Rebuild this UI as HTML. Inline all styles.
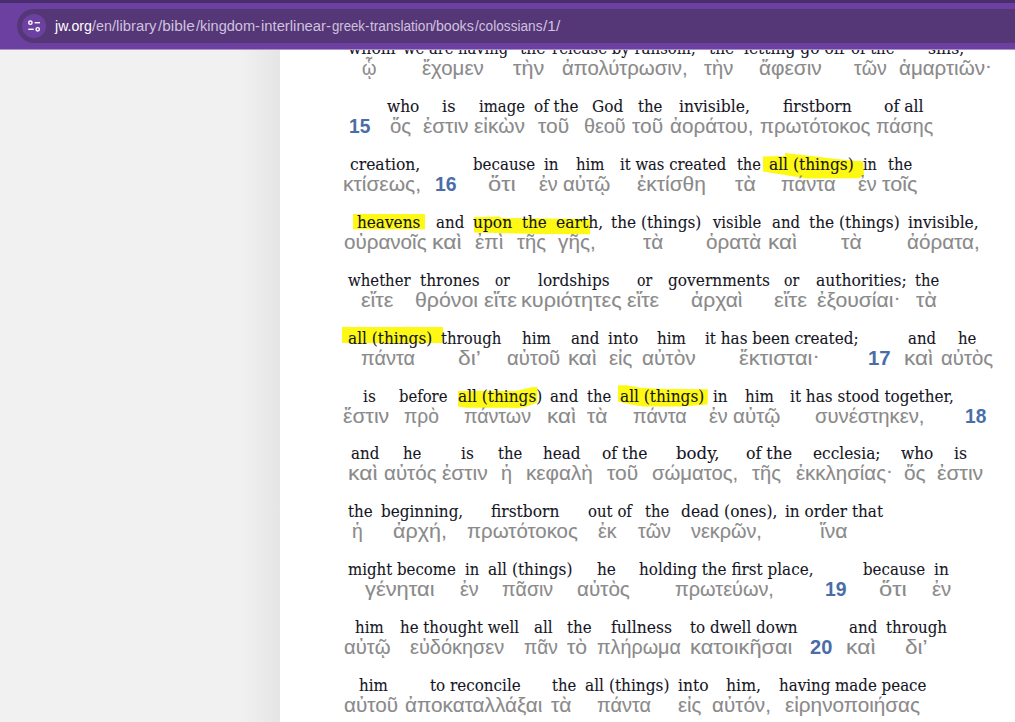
<!DOCTYPE html>
<html lang="en"><head><meta charset="utf-8"><title>Colossians 1 — Kingdom Interlinear</title>
<style>
html,body{margin:0;padding:0;}
body{width:1015px;height:722px;overflow:hidden;background:#fff;position:relative;font-family:"Liberation Sans", "DejaVu Sans", sans-serif;}
#side{position:absolute;left:0;top:49px;width:280px;height:673px;background:linear-gradient(to right,#f1f1f1 0,#f1f1f1 240px,#e5e5e5 280px);}
#page{position:absolute;left:0;top:0;width:1015px;height:722px;overflow:hidden;}
.t{position:absolute;white-space:pre;line-height:24px;height:24px;transform-origin:0 50%;margin:0;padding:0;}
.e{font-family:"DejaVu Serif", "Liberation Serif", serif;font-size:16.8px;color:#15151f;-webkit-text-stroke:0.1px #15151f;}
.g{font-family:"Liberation Sans", "DejaVu Sans", sans-serif;font-size:20.4px;color:#8a8a8a;-webkit-text-stroke:0.1px #8a8a8a;}
.u,.w{font-family:"Liberation Sans",sans-serif;font-size:13.8px;color:#cfc2de;}
.w{color:#fff;}
.at{position:relative;top:-3px;}
.v{font-family:"Liberation Sans", "DejaVu Sans", sans-serif;font-size:19.4px;font-weight:bold;color:#4a6da7;}
#bar{position:absolute;left:0;top:0;width:1015px;height:49px;background:#6c40a0;border-bottom:1px solid #a991c8;box-sizing:content-box;}
#strip{position:absolute;left:0;top:0;width:1015px;height:3px;background:#4a2d6e;}
#pill{position:absolute;left:17px;top:9px;width:1030px;height:34px;border-radius:17px;background:#553778;}
#ic{position:absolute;left:22px;top:14px;width:24px;height:24px;border-radius:12px;background:#6c40a0;}
#url{position:absolute;white-space:pre;transform-origin:0 50%;font-family:"Liberation Sans",sans-serif;font-size:14px;line-height:20px;height:20px;color:#d2c6e0;}
#url b{font-weight:normal;color:#fff;}
</style></head>
<body>
<div id="page">
<div id="side"></div>
<svg id="hl" style="position:absolute;left:0;top:0" width="1015" height="722" viewBox="0 0 1015 722" fill="#fdf914">
<polygon points="763,156.4 785,156 785.1,153.1 803,155 832,158.4 856.7,161 863,161.2 864.2,175.5 859,178.2 807,178.5 784.6,175 763,171.4"/>
<rect x="353" y="214" width="72" height="15.3"/>
<polygon points="474,217 500,216.5 501,218 590,219 590.2,234.2 540,234 474,232.6"/>
<rect x="342" y="327" width="101" height="16"/>
<polygon points="458,391.1 516,391.1 531.6,387.3 537.5,386.9 537,402.6 527,406.5 518.6,407.9 466.6,407.7 458,406.5"/>
<polygon points="618,385.2 626.3,385.2 640.5,387.8 664,389 707.9,389.2 707.6,404.4 680.7,406.5 642.8,406.5 633.4,405 618,401.4"/>
</svg>

<div id="text">
<span class="t e" style="left:348.00px;top:36.00px;transform:scaleX(0.9303)">whom</span>
<span class="t e" style="left:402.90px;top:36.00px;transform:scaleX(0.8755)">we are having</span>
<span class="t e" style="left:520.00px;top:36.00px;transform:scaleX(0.9255)">the</span>
<span class="t e" style="left:552.00px;top:36.00px;transform:scaleX(0.8898)">release by ransom,</span>
<span class="t e" style="left:709.25px;top:36.00px;transform:scaleX(0.9165)">the</span>
<span class="t e" style="left:743.50px;top:36.00px;transform:scaleX(0.9223)">letting go off</span>
<span class="t e" style="left:850.50px;top:36.00px;transform:scaleX(0.8841)">of the</span>
<span class="t e" style="left:927.50px;top:36.00px;transform:scaleX(0.9359)">sins,</span>
<span class="t g" style="left:361.50px;top:56.00px;transform:scaleX(0.9062)">ᾧ</span>
<span class="t g" style="left:422.00px;top:56.00px;transform:scaleX(1.0012)">ἔχομεν</span>
<span class="t g" style="left:513.25px;top:56.00px;transform:scaleX(1.0546)">τὴν</span>
<span class="t g" style="left:561.50px;top:56.00px;transform:scaleX(0.9979)">ἀπολύτρωσιν,</span>
<span class="t g" style="left:704.25px;top:56.00px;transform:scaleX(0.9866)">τὴν</span>
<span class="t g" style="left:758.50px;top:56.00px;transform:scaleX(1.0210)">ἄφεσιν</span>
<span class="t g" style="left:853.50px;top:56.00px;transform:scaleX(0.9566)">τῶν</span>
<span class="t g" style="left:899.25px;top:56.00px;transform:scaleX(1.0074)">ἁμαρτιῶν<span class="at">·</span></span>
<span class="t e" style="left:387.00px;top:94.00px;transform:scaleX(0.9169)">who</span>
<span class="t e" style="left:441.50px;top:94.00px;transform:scaleX(0.9725)">is</span>
<span class="t e" style="left:479.00px;top:94.00px;transform:scaleX(0.8842)">image</span>
<span class="t e" style="left:534.00px;top:94.00px;transform:scaleX(0.9045)">of the</span>
<span class="t e" style="left:592.25px;top:94.00px;transform:scaleX(0.9128)">God</span>
<span class="t e" style="left:638.00px;top:94.00px;transform:scaleX(0.8892)">the</span>
<span class="t e" style="left:678.50px;top:94.00px;transform:scaleX(0.9295)">invisible,</span>
<span class="t e" style="left:782.50px;top:94.00px;transform:scaleX(0.9269)">firstborn</span>
<span class="t e" style="left:884.25px;top:94.00px;transform:scaleX(0.9341)">of all</span>
<span class="t g" style="left:390.25px;top:114.00px;transform:scaleX(0.9958)">ὅς</span>
<span class="t g" style="left:423.25px;top:114.00px;transform:scaleX(1.0224)">ἐστιν</span>
<span class="t g" style="left:473.50px;top:114.00px;transform:scaleX(1.0204)">εἰκὼν</span>
<span class="t g" style="left:538.25px;top:114.00px;transform:scaleX(1.0297)">τοῦ</span>
<span class="t g" style="left:583.78px;top:114.00px;transform:scaleX(0.9696)">θεοῦ</span>
<span class="t g" style="left:632.25px;top:114.00px;transform:scaleX(1.0297)">τοῦ</span>
<span class="t g" style="left:669.75px;top:114.00px;transform:scaleX(1.0121)">ἀοράτου,</span>
<span class="t g" style="left:759.75px;top:114.00px;transform:scaleX(0.9973)">πρωτότοκος</span>
<span class="t g" style="left:875.50px;top:114.00px;transform:scaleX(0.9623)">πάσης</span>
<span class="t v" style="left:348.51px;top:114.00px;transform:scaleX(0.9863)">15</span>
<span class="t e" style="left:349.50px;top:152.00px;transform:scaleX(0.9277)">creation,</span>
<span class="t e" style="left:472.75px;top:152.00px;transform:scaleX(0.8957)">because</span>
<span class="t e" style="left:544.00px;top:152.00px;transform:scaleX(0.9012)">in</span>
<span class="t e" style="left:575.75px;top:152.00px;transform:scaleX(0.8858)">him</span>
<span class="t e" style="left:620.25px;top:152.00px;transform:scaleX(0.8817)">it was created</span>
<span class="t e" style="left:736.50px;top:152.00px;transform:scaleX(0.8711)">the</span>
<span class="t e" style="left:768.50px;top:152.00px;transform:scaleX(0.9187)">all (things)</span>
<span class="t e" style="left:863.00px;top:152.00px;transform:scaleX(0.8554)">in</span>
<span class="t e" style="left:888.00px;top:152.00px;transform:scaleX(0.8802)">the</span>
<span class="t g" style="left:342.97px;top:172.00px;transform:scaleX(1.0280)">κτίσεως,</span>
<span class="t g" style="left:488.25px;top:172.00px;transform:scaleX(1.1648)">ὅτι</span>
<span class="t g" style="left:539.00px;top:172.00px;transform:scaleX(0.9691)">ἐν</span>
<span class="t g" style="left:563.25px;top:172.00px;transform:scaleX(1.0054)">αὐτῷ</span>
<span class="t g" style="left:636.50px;top:172.00px;transform:scaleX(1.0255)">ἐκτίσθη</span>
<span class="t g" style="left:734.50px;top:172.00px;transform:scaleX(1.0471)">τὰ</span>
<span class="t g" style="left:781.25px;top:172.00px;transform:scaleX(0.9860)">πάντα</span>
<span class="t g" style="left:858.00px;top:172.00px;transform:scaleX(0.9691)">ἐν</span>
<span class="t g" style="left:882.25px;top:172.00px;transform:scaleX(1.0554)">τοῖς</span>
<span class="t v" style="left:434.50px;top:172.00px;transform:scaleX(0.9984)">16</span>
<span class="t e" style="left:356.50px;top:210.00px;transform:scaleX(0.9099)">heavens</span>
<span class="t e" style="left:435.75px;top:210.00px;transform:scaleX(0.8959)">and</span>
<span class="t e" style="left:473.25px;top:210.00px;transform:scaleX(0.9202)">upon</span>
<span class="t e" style="left:522.00px;top:210.00px;transform:scaleX(0.8983)">the</span>
<span class="t e" style="left:555.75px;top:210.00px;transform:scaleX(0.9291)">earth,</span>
<span class="t e" style="left:611.25px;top:210.00px;transform:scaleX(0.9117)">the (things)</span>
<span class="t e" style="left:712.88px;top:210.00px;transform:scaleX(0.8805)">visible</span>
<span class="t e" style="left:771.75px;top:210.00px;transform:scaleX(0.8880)">and</span>
<span class="t e" style="left:808.75px;top:210.00px;transform:scaleX(0.9168)">the (things)</span>
<span class="t e" style="left:907.50px;top:210.00px;transform:scaleX(0.9262)">invisible,</span>
<span class="t g" style="left:344.00px;top:230.00px;transform:scaleX(1.0098)">οὐρανοῖς</span>
<span class="t g" style="left:432.13px;top:230.00px;transform:scaleX(1.1219)">καὶ</span>
<span class="t g" style="left:475.25px;top:230.00px;transform:scaleX(1.0218)">ἐπὶ</span>
<span class="t g" style="left:517.00px;top:230.00px;transform:scaleX(0.9866)">τῆς</span>
<span class="t g" style="left:558.25px;top:230.00px;transform:scaleX(1.0180)">γῆς,</span>
<span class="t g" style="left:643.25px;top:230.00px;transform:scaleX(1.0222)">τὰ</span>
<span class="t g" style="left:706.25px;top:230.00px;transform:scaleX(1.0131)">ὁρατὰ</span>
<span class="t g" style="left:768.40px;top:230.00px;transform:scaleX(1.1017)">καὶ</span>
<span class="t g" style="left:841.00px;top:230.00px;transform:scaleX(1.0471)">τὰ</span>
<span class="t g" style="left:906.75px;top:230.00px;transform:scaleX(1.0133)">ἀόρατα,</span>
<span class="t e" style="left:347.50px;top:268.00px;transform:scaleX(0.8871)">whether</span>
<span class="t e" style="left:420.25px;top:268.00px;transform:scaleX(0.9159)">thrones</span>
<span class="t e" style="left:494.50px;top:268.00px;transform:scaleX(0.8114)">or</span>
<span class="t e" style="left:538.25px;top:268.00px;transform:scaleX(0.9130)">lordships</span>
<span class="t e" style="left:636.50px;top:268.00px;transform:scaleX(0.8376)">or</span>
<span class="t e" style="left:668.25px;top:268.00px;transform:scaleX(0.9164)">governments</span>
<span class="t e" style="left:784.25px;top:268.00px;transform:scaleX(0.8376)">or</span>
<span class="t e" style="left:816.00px;top:268.00px;transform:scaleX(0.9248)">authorities;</span>
<span class="t e" style="left:914.75px;top:268.00px;transform:scaleX(0.8802)">the</span>
<span class="t g" style="left:360.75px;top:288.00px;transform:scaleX(1.0513)">εἴτε</span>
<span class="t g" style="left:415.45px;top:288.00px;transform:scaleX(1.0456)">θρόνοι</span>
<span class="t g" style="left:484.00px;top:288.00px;transform:scaleX(1.0676)">εἴτε</span>
<span class="t g" style="left:520.94px;top:288.00px;transform:scaleX(1.0604)">κυριότητες</span>
<span class="t g" style="left:626.50px;top:288.00px;transform:scaleX(1.0432)">εἴτε</span>
<span class="t g" style="left:690.75px;top:288.00px;transform:scaleX(1.0338)">ἀρχαὶ</span>
<span class="t g" style="left:773.75px;top:288.00px;transform:scaleX(1.0676)">εἴτε</span>
<span class="t g" style="left:816.75px;top:288.00px;transform:scaleX(1.0401)">ἐξουσίαι<span class="at">·</span></span>
<span class="t g" style="left:916.00px;top:288.00px;transform:scaleX(1.0471)">τὰ</span>
<span class="t e" style="left:347.50px;top:326.00px;transform:scaleX(0.9133)">all (things)</span>
<span class="t e" style="left:441.25px;top:326.00px;transform:scaleX(0.8867)">through</span>
<span class="t e" style="left:522.00px;top:326.00px;transform:scaleX(0.9013)">him</span>
<span class="t e" style="left:570.75px;top:326.00px;transform:scaleX(0.8959)">and</span>
<span class="t e" style="left:607.75px;top:326.00px;transform:scaleX(0.9189)">into</span>
<span class="t e" style="left:656.50px;top:326.00px;transform:scaleX(0.9013)">him</span>
<span class="t e" style="left:704.50px;top:326.00px;transform:scaleX(0.9063)">it has been created;</span>
<span class="t e" style="left:907.50px;top:326.00px;transform:scaleX(0.8880)">and</span>
<span class="t e" style="left:957.50px;top:326.00px;transform:scaleX(0.8891)">he</span>
<span class="t g" style="left:360.75px;top:346.00px;transform:scaleX(0.9770)">πάντα</span>
<span class="t g" style="left:458.25px;top:346.00px;transform:scaleX(1.1192)">δι’</span>
<span class="t g" style="left:507.00px;top:346.00px;transform:scaleX(0.9991)">αὐτοῦ</span>
<span class="t g" style="left:567.91px;top:346.00px;transform:scaleX(1.0916)">καὶ</span>
<span class="t g" style="left:609.00px;top:346.00px;transform:scaleX(0.9949)">εἰς</span>
<span class="t g" style="left:642.00px;top:346.00px;transform:scaleX(1.0223)">αὐτὸν</span>
<span class="t g" style="left:739.00px;top:346.00px;transform:scaleX(1.0709)">ἔκτισται<span class="at">·</span></span>
<span class="t g" style="left:904.40px;top:346.00px;transform:scaleX(1.1017)">καὶ</span>
<span class="t g" style="left:940.50px;top:346.00px;transform:scaleX(0.9984)">αὐτὸς</span>
<span class="t v" style="left:867.95px;top:346.00px;transform:scaleX(1.0488)">17</span>
<span class="t e" style="left:363.25px;top:384.00px;transform:scaleX(0.9164)">is</span>
<span class="t e" style="left:399.00px;top:384.00px;transform:scaleX(0.8817)">before</span>
<span class="t e" style="left:457.50px;top:384.00px;transform:scaleX(0.9133)">all (things)</span>
<span class="t e" style="left:549.50px;top:384.00px;transform:scaleX(0.8959)">and</span>
<span class="t e" style="left:587.00px;top:384.00px;transform:scaleX(0.8802)">the</span>
<span class="t e" style="left:620.00px;top:384.00px;transform:scaleX(0.9133)">all (things)</span>
<span class="t e" style="left:713.25px;top:384.00px;transform:scaleX(0.9012)">in</span>
<span class="t e" style="left:744.50px;top:384.00px;transform:scaleX(0.9013)">him</span>
<span class="t e" style="left:790.00px;top:384.00px;transform:scaleX(0.9091)">it has stood together,</span>
<span class="t g" style="left:343.25px;top:404.00px;transform:scaleX(1.0393)">ἔστιν</span>
<span class="t g" style="left:404.00px;top:404.00px;transform:scaleX(0.9409)">πρὸ</span>
<span class="t g" style="left:463.75px;top:404.00px;transform:scaleX(0.9611)">πάντων</span>
<span class="t g" style="left:546.65px;top:404.00px;transform:scaleX(1.1017)">καὶ</span>
<span class="t g" style="left:586.50px;top:404.00px;transform:scaleX(1.0347)">τὰ</span>
<span class="t g" style="left:632.75px;top:404.00px;transform:scaleX(0.9725)">πάντα</span>
<span class="t g" style="left:708.75px;top:404.00px;transform:scaleX(0.9691)">ἐν</span>
<span class="t g" style="left:732.75px;top:404.00px;transform:scaleX(1.0108)">αὐτῷ</span>
<span class="t g" style="left:815.00px;top:404.00px;transform:scaleX(0.9933)">συνέστηκεν,</span>
<span class="t v" style="left:965.01px;top:404.00px;transform:scaleX(0.9863)">18</span>
<span class="t e" style="left:350.75px;top:441.00px;transform:scaleX(0.8959)">and</span>
<span class="t e" style="left:403.25px;top:441.00px;transform:scaleX(0.8891)">he</span>
<span class="t e" style="left:461.25px;top:441.00px;transform:scaleX(0.9164)">is</span>
<span class="t e" style="left:497.50px;top:441.00px;transform:scaleX(0.8802)">the</span>
<span class="t e" style="left:543.25px;top:441.00px;transform:scaleX(0.9043)">head</span>
<span class="t e" style="left:602.00px;top:441.00px;transform:scaleX(0.9248)">of the</span>
<span class="t e" style="left:675.75px;top:441.00px;transform:scaleX(0.9863)">body,</span>
<span class="t e" style="left:745.75px;top:441.00px;transform:scaleX(0.9400)">of the</span>
<span class="t e" style="left:813.00px;top:441.00px;transform:scaleX(0.9165)">ecclesia;</span>
<span class="t e" style="left:900.50px;top:441.00px;transform:scaleX(0.9169)">who</span>
<span class="t e" style="left:953.50px;top:441.00px;transform:scaleX(0.9351)">is</span>
<span class="t g" style="left:347.88px;top:461.00px;transform:scaleX(1.1219)">καὶ</span>
<span class="t g" style="left:384.00px;top:461.00px;transform:scaleX(1.0079)">αὐτός</span>
<span class="t g" style="left:442.00px;top:461.00px;transform:scaleX(1.0280)">ἐστιν</span>
<span class="t g" style="left:501.02px;top:461.00px;transform:scaleX(0.9750)">ἡ</span>
<span class="t g" style="left:525.98px;top:461.00px;transform:scaleX(1.0156)">κεφαλὴ</span>
<span class="t g" style="left:606.50px;top:461.00px;transform:scaleX(1.0297)">τοῦ</span>
<span class="t g" style="left:651.50px;top:461.00px;transform:scaleX(0.9944)">σώματος,</span>
<span class="t g" style="left:752.00px;top:461.00px;transform:scaleX(0.9866)">τῆς</span>
<span class="t g" style="left:796.00px;top:461.00px;transform:scaleX(1.0027)">ἐκκλησίας<span class="at">·</span></span>
<span class="t g" style="left:903.50px;top:461.00px;transform:scaleX(1.0192)">ὅς</span>
<span class="t g" style="left:936.75px;top:461.00px;transform:scaleX(1.0393)">ἐστιν</span>
<span class="t e" style="left:347.50px;top:499.00px;transform:scaleX(0.8983)">the</span>
<span class="t e" style="left:381.25px;top:499.00px;transform:scaleX(0.9069)">beginning,</span>
<span class="t e" style="left:490.75px;top:499.00px;transform:scaleX(0.9202)">firstborn</span>
<span class="t e" style="left:587.50px;top:499.00px;transform:scaleX(0.8905)">out of</span>
<span class="t e" style="left:645.00px;top:499.00px;transform:scaleX(0.8802)">the</span>
<span class="t e" style="left:680.75px;top:499.00px;transform:scaleX(0.9220)">dead (ones),</span>
<span class="t e" style="left:785.00px;top:499.00px;transform:scaleX(0.9079)">in order that</span>
<span class="t g" style="left:351.80px;top:519.00px;transform:scaleX(0.9500)">ἡ</span>
<span class="t g" style="left:393.25px;top:519.00px;transform:scaleX(1.0570)">ἀρχή,</span>
<span class="t g" style="left:467.00px;top:519.00px;transform:scaleX(1.0018)">πρωτότοκος</span>
<span class="t g" style="left:598.25px;top:519.00px;transform:scaleX(0.9582)">ἐκ</span>
<span class="t g" style="left:637.75px;top:519.00px;transform:scaleX(0.9639)">τῶν</span>
<span class="t g" style="left:691.25px;top:519.00px;transform:scaleX(0.9727)">νεκρῶν,</span>
<span class="t g" style="left:820.00px;top:519.00px;transform:scaleX(1.0383)">ἵνα</span>
<span class="t e" style="left:347.50px;top:557.00px;transform:scaleX(0.8926)">might become</span>
<span class="t e" style="left:464.50px;top:557.00px;transform:scaleX(0.8707)">in</span>
<span class="t e" style="left:487.75px;top:557.00px;transform:scaleX(0.9160)">all (things)</span>
<span class="t e" style="left:596.50px;top:557.00px;transform:scaleX(0.9131)">he</span>
<span class="t e" style="left:639.00px;top:557.00px;transform:scaleX(0.9050)">holding the first place,</span>
<span class="t e" style="left:863.00px;top:557.00px;transform:scaleX(0.8957)">because</span>
<span class="t e" style="left:933.50px;top:557.00px;transform:scaleX(0.9165)">in</span>
<span class="t g" style="left:364.50px;top:577.00px;transform:scaleX(1.0718)">γένηται</span>
<span class="t g" style="left:460.00px;top:577.00px;transform:scaleX(0.9691)">ἐν</span>
<span class="t g" style="left:502.00px;top:577.00px;transform:scaleX(0.9628)">πᾶσιν</span>
<span class="t g" style="left:577.00px;top:577.00px;transform:scaleX(1.0127)">αὐτὸς</span>
<span class="t g" style="left:674.50px;top:577.00px;transform:scaleX(0.9753)">πρωτεύων,</span>
<span class="t g" style="left:878.50px;top:577.00px;transform:scaleX(1.1648)">ὅτι</span>
<span class="t g" style="left:931.75px;top:577.00px;transform:scaleX(0.9953)">ἐν</span>
<span class="t v" style="left:825.00px;top:577.00px;transform:scaleX(0.9984)">19</span>
<span class="t e" style="left:355.00px;top:615.00px;transform:scaleX(0.8936)">him</span>
<span class="t e" style="left:400.00px;top:615.00px;transform:scaleX(0.8940)">he thought well</span>
<span class="t e" style="left:534.00px;top:615.00px;transform:scaleX(0.8958)">all</span>
<span class="t e" style="left:567.00px;top:615.00px;transform:scaleX(0.8983)">the</span>
<span class="t e" style="left:610.75px;top:615.00px;transform:scaleX(0.9293)">fullness</span>
<span class="t e" style="left:690.25px;top:615.00px;transform:scaleX(0.9017)">to dwell down</span>
<span class="t e" style="left:848.75px;top:615.00px;transform:scaleX(0.8959)">and</span>
<span class="t e" style="left:886.00px;top:615.00px;transform:scaleX(0.8977)">through</span>
<span class="t g" style="left:343.75px;top:635.00px;transform:scaleX(0.9948)">αὐτῷ</span>
<span class="t g" style="left:409.50px;top:635.00px;transform:scaleX(0.9777)">εὐδόκησεν</span>
<span class="t g" style="left:524.00px;top:635.00px;transform:scaleX(0.9343)">πᾶν</span>
<span class="t g" style="left:566.50px;top:635.00px;transform:scaleX(1.0365)">τὸ</span>
<span class="t g" style="left:596.50px;top:635.00px;transform:scaleX(0.9669)">πλήρωμα</span>
<span class="t g" style="left:690.18px;top:635.00px;transform:scaleX(1.0686)">κατοικῆσαι</span>
<span class="t g" style="left:845.63px;top:635.00px;transform:scaleX(1.1219)">καὶ</span>
<span class="t g" style="left:905.00px;top:635.00px;transform:scaleX(1.1066)">δι’</span>
<span class="t v" style="left:809.50px;top:635.00px;transform:scaleX(1.0344)">20</span>
<span class="t e" style="left:359.00px;top:673.00px;transform:scaleX(0.9013)">him</span>
<span class="t e" style="left:430.25px;top:673.00px;transform:scaleX(0.9023)">to reconcile</span>
<span class="t e" style="left:551.50px;top:673.00px;transform:scaleX(0.8802)">the</span>
<span class="t e" style="left:584.50px;top:673.00px;transform:scaleX(0.9160)">all (things)</span>
<span class="t e" style="left:677.50px;top:673.00px;transform:scaleX(0.9265)">into</span>
<span class="t e" style="left:726.25px;top:673.00px;transform:scaleX(0.9352)">him,</span>
<span class="t e" style="left:778.50px;top:673.00px;transform:scaleX(0.8964)">having made peace</span>
<span class="t g" style="left:344.00px;top:693.00px;transform:scaleX(1.0180)">αὐτοῦ</span>
<span class="t g" style="left:404.50px;top:693.00px;transform:scaleX(1.0172)">ἀποκαταλλάξαι</span>
<span class="t g" style="left:550.75px;top:693.00px;transform:scaleX(1.0347)">τὰ</span>
<span class="t g" style="left:597.00px;top:693.00px;transform:scaleX(0.9770)">πάντα</span>
<span class="t g" style="left:678.25px;top:693.00px;transform:scaleX(0.9949)">εἰς</span>
<span class="t g" style="left:712.00px;top:693.00px;transform:scaleX(1.0127)">αὐτόν,</span>
<span class="t g" style="left:785.00px;top:693.00px;transform:scaleX(1.0156)">εἰρηνοποιήσας</span>
</div>
<div id="bar"><div id="strip"></div><div id="pill"></div><div id="ic"></div><svg id="tune" style="position:absolute;left:22px;top:14px" width="24" height="24" viewBox="0 0 24 24" fill="none" stroke="#fff" stroke-width="1.4">
<circle cx="8.4" cy="8.7" r="1.7"/><path d="M12.6 8.7H18"/><path d="M6.3 15.3H11.7"/><circle cx="15.7" cy="15.3" r="1.7"/></svg>
<span class="t w" style="left:54.82px;top:15.00px;transform:scaleX(1.0229)">jw.org</span><span class="t u" style="left:92.30px;top:15.00px;transform:scaleX(1.0375)">/en</span><span class="t u" style="left:111.70px;top:15.00px;transform:scaleX(1.0747)">/library</span><span class="t u" style="left:157.60px;top:15.00px;transform:scaleX(1.1138)">/bible</span><span class="t u" style="left:195.50px;top:15.00px;transform:scaleX(1.0553)">/kingdom-</span><span class="t u" style="left:260.50px;top:15.00px;transform:scaleX(1.0730)">interlinear-</span><span class="t u" style="left:331.70px;top:15.00px;transform:scaleX(0.9529)">greek-</span><span class="t u" style="left:369.50px;top:15.00px;transform:scaleX(0.9908)">translation</span><span class="t u" style="left:432.40px;top:15.00px;transform:scaleX(1.0282)">/books</span><span class="t u" style="left:475.20px;top:15.00px;transform:scaleX(0.9890)">/colossians</span><span class="t u" style="left:543.30px;top:15.00px;transform:scaleX(1.1221)">/1/</span></div>
</div>
</body></html>
